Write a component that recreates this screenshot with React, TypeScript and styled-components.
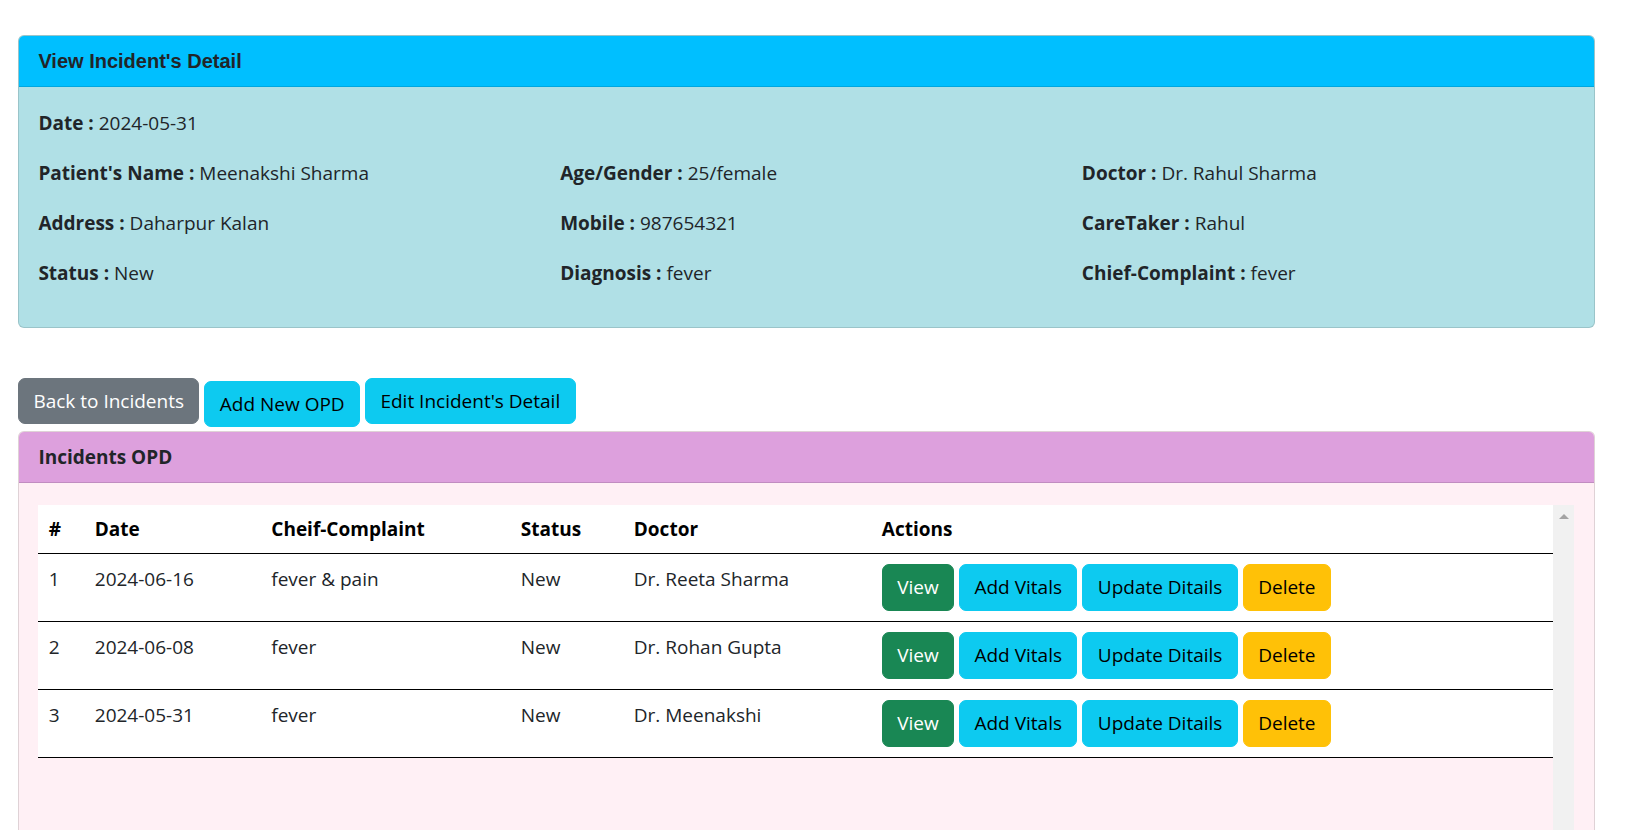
import React from "react";
import styled, { createGlobalStyle, css } from "styled-components";

const GlobalStyle = createGlobalStyle`
  html, body {
    margin: 0;
    padding: 0;
    background: #ffffff;
  }
  body {
    font-family: "Open Sans", "Noto Sans", Arial, sans-serif;
    font-size: 19px;
    line-height: 28.8px;
    color: #212529;
  }
  * { box-sizing: border-box; }
`;

const Page = styled.div`
  padding: 35px 42px 0 18px;
`;

const Card = styled.section<{ $bg: string }>`
  border: 1px solid rgba(0, 0, 0, 0.125);
  border-radius: 6px;
  background: ${(p) => p.$bg};
  overflow: hidden;
`;

const DetailHeader = styled.header`
  background: #00bfff;
  border-bottom: 1px solid rgba(0, 0, 0, 0.125);
  padding: 13px 19.4px;
  font-family: "Liberation Sans", Arial, sans-serif;
  font-weight: 700;
  font-size: 20px;
  line-height: 24px;
  color: #212529;
`;

const DetailBody = styled.div`
  display: grid;
  grid-template-columns: repeat(3, 1fr);
  column-gap: 29px;
  row-gap: 21.2px;
  padding: 21.6px 19.4px 40px;
`;

const Field = styled.div<{ $full?: boolean }>`
  ${(p) =>
    p.$full &&
    css`
      grid-column: 1 / -1;
    `}
  white-space: nowrap;
`;

const Label = styled.b`
  font-weight: 700;
`;

const ButtonBar = styled.div`
  display: flex;
  align-items: flex-start;
  gap: 5px;
  margin-top: 50px;
`;

type Variant = "secondary" | "info" | "success" | "warning";

const variantColors: Record<Variant, { bg: string; fg: string }> = {
  secondary: { bg: "#6c757d", fg: "#ffffff" },
  info: { bg: "#0dcaf0", fg: "#000000" },
  success: { bg: "#198754", fg: "#ffffff" },
  warning: { bg: "#ffc107", fg: "#000000" },
};

const Button = styled.button<{ $variant: Variant; $offset?: number; $row?: boolean }>`
  font-family: "Open Sans", "Noto Sans", Arial, sans-serif;
  font-size: 19px;
  line-height: 28.8px;
  padding: ${(p) => (p.$row ? "8px 14.4px" : "7.6px 14.4px")};
  border: 1px solid ${(p) => variantColors[p.$variant].bg};
  border-radius: 7px;
  background: ${(p) => variantColors[p.$variant].bg};
  color: ${(p) => variantColors[p.$variant].fg};
  margin-top: ${(p) => p.$offset ?? 0}px;
  white-space: nowrap;
  cursor: pointer;
`;

const OpdCard = styled(Card)`
  margin-top: 4px;
`;

const OpdHeader = styled.header`
  background: #dda0dd;
  border-bottom: 1px solid rgba(0, 0, 0, 0.125);
  padding: 10.6px 19.4px;
  font-weight: 700;
  font-size: 19px;
  line-height: 28.8px;
  color: #212529;
`;

const OpdBody = styled.div`
  padding: 22px 20px 0 19.4px;
`;

const TableArea = styled.div`
  display: flex;
  height: 420px;
`;

const TableScroll = styled.div`
  flex: 1;
  min-width: 0;
`;

const ScrollTrack = styled.div`
  width: 21px;
  flex: none;
  background: #f1f1f1;
  display: flex;
  flex-direction: column;
  align-items: center;
  padding-top: 9px;
`;

const ScrollArrow = styled.span`
  width: 0;
  height: 0;
  border-left: 5px solid transparent;
  border-right: 5px solid transparent;
  border-bottom: 5px solid #a3a3a3;
`;

const Table = styled.table`
  width: 100%;
  border-collapse: collapse;
  table-layout: fixed;
  background: #ffffff;
`;

const Th = styled.th`
  text-align: left;
  font-weight: 700;
  color: #000000;
  padding: 10px 10.4px 9px;
  border-bottom: 1px solid #000000;
`;

const Td = styled.td<{ $actions?: boolean }>`
  vertical-align: top;
  padding: ${(p) => (p.$actions ? "10px 10.4px" : "11px 10.4px 10px")};
  border-bottom: 1px solid #000000;
  color: #212529;
  white-space: nowrap;
`;

const Actions = styled.div`
  display: flex;
  gap: 5px;
`;

const details: [string, string][][] = [
  [
    ["Patient's Name :", "Meenakshi Sharma"],
    ["Age/Gender :", "25/female"],
    ["Doctor :", "Dr. Rahul Sharma"],
  ],
  [
    ["Address :", "Daharpur Kalan"],
    ["Mobile :", "987654321"],
    ["CareTaker :", "Rahul"],
  ],
  [
    ["Status :", "New"],
    ["Diagnosis :", "fever"],
    ["Chief-Complaint :", "fever"],
  ],
];

const opds = [
  { id: 1, date: "2024-06-16", complaint: "fever & pain", status: "New", doctor: "Dr. Reeta Sharma" },
  { id: 2, date: "2024-06-08", complaint: "fever", status: "New", doctor: "Dr. Rohan Gupta" },
  { id: 3, date: "2024-05-31", complaint: "fever", status: "New", doctor: "Dr. Meenakshi" },
];

export default function App() {
  return (
    <>
      <GlobalStyle />
      <Page>
        <Card $bg="#b0e0e6">
          <DetailHeader>View Incident's Detail</DetailHeader>
          <DetailBody>
            <Field $full>
              <Label>Date :</Label> 2024-05-31
            </Field>
            {details.flat().map(([label, value]) => (
              <Field key={label}>
                <Label>{label}</Label> {value}
              </Field>
            ))}
          </DetailBody>
        </Card>

        <ButtonBar>
          <Button $variant="secondary">Back to Incidents</Button>
          <Button $variant="info" $offset={3}>
            Add New OPD
          </Button>
          <Button $variant="info">Edit Incident's Detail</Button>
        </ButtonBar>

        <OpdCard $bg="#fff0f5">
          <OpdHeader>Incidents OPD</OpdHeader>
          <OpdBody>
            <TableArea>
              <TableScroll>
                <Table>
                  <colgroup>
                    <col style={{ width: 46 }} />
                    <col style={{ width: 176.5 }} />
                    <col style={{ width: 249.5 }} />
                    <col style={{ width: 113 }} />
                    <col style={{ width: 248 }} />
                    <col />
                  </colgroup>
                  <thead>
                    <tr>
                      <Th>#</Th>
                      <Th>Date</Th>
                      <Th>Cheif-Complaint</Th>
                      <Th>Status</Th>
                      <Th>Doctor</Th>
                      <Th>Actions</Th>
                    </tr>
                  </thead>
                  <tbody>
                    {opds.map((o) => (
                      <tr key={o.id}>
                        <Td>{o.id}</Td>
                        <Td>{o.date}</Td>
                        <Td>{o.complaint}</Td>
                        <Td>{o.status}</Td>
                        <Td>{o.doctor}</Td>
                        <Td $actions>
                          <Actions>
                            <Button $variant="success" $row>View</Button>
                            <Button $variant="info" $row>Add Vitals</Button>
                            <Button $variant="info" $row>Update Ditails</Button>
                            <Button $variant="warning" $row>Delete</Button>
                          </Actions>
                        </Td>
                      </tr>
                    ))}
                  </tbody>
                </Table>
              </TableScroll>
              <ScrollTrack>
                <ScrollArrow />
              </ScrollTrack>
            </TableArea>
          </OpdBody>
        </OpdCard>
      </Page>
    </>
  );
}
